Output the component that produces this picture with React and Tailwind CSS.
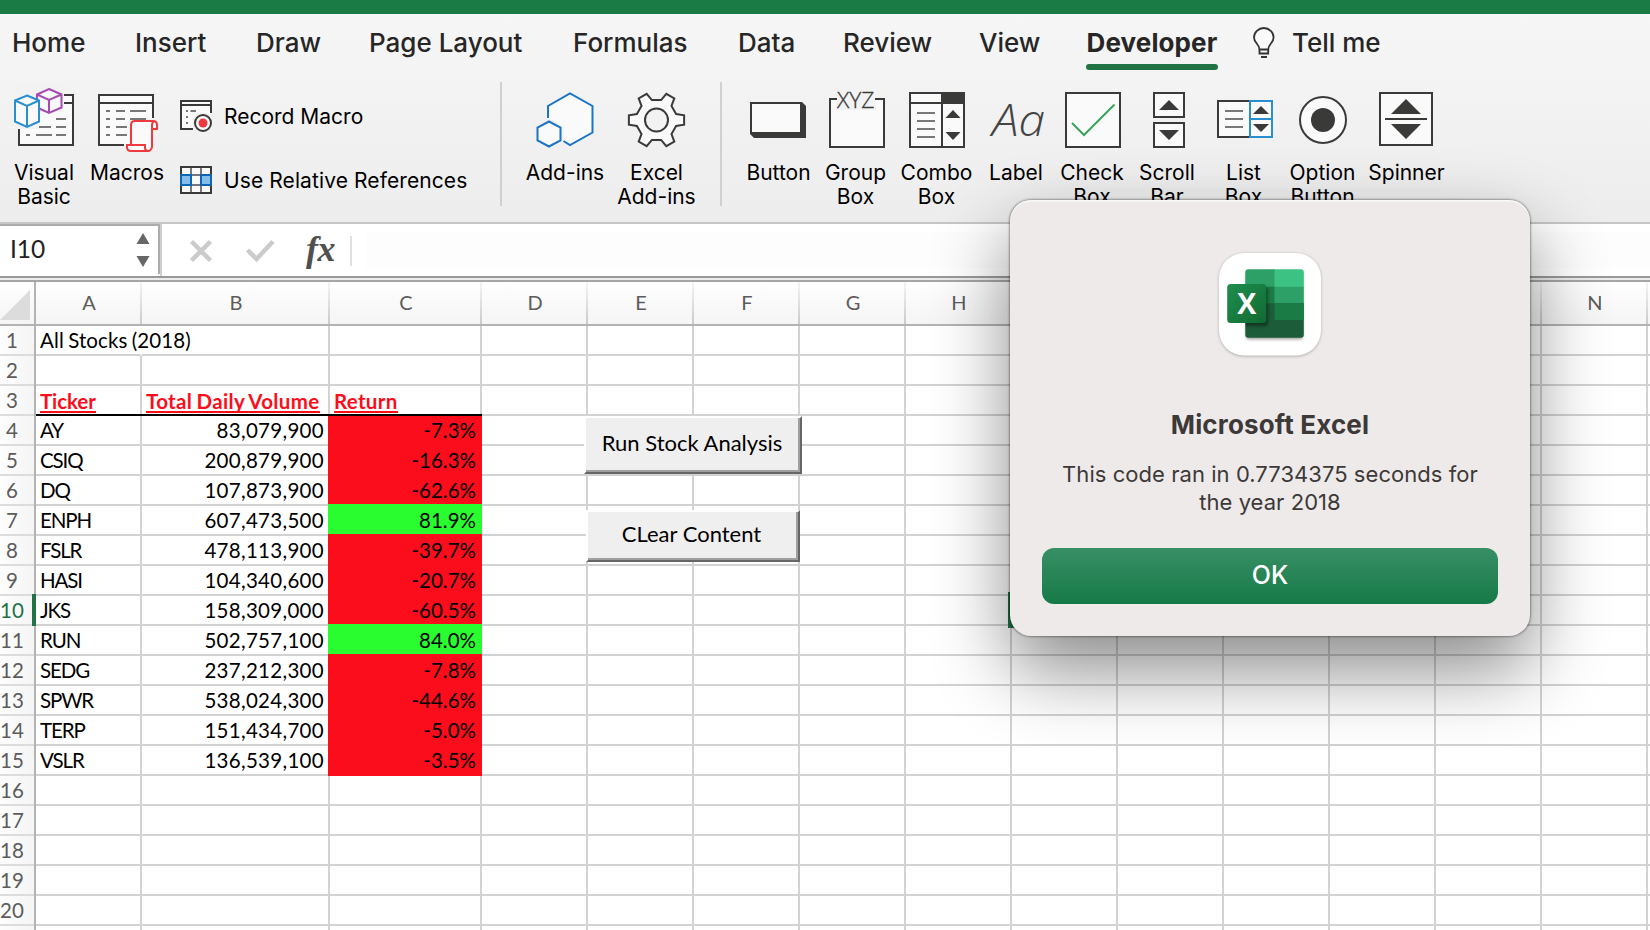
import React from 'react';

const INK = '#3a3a38';
const PALE = '#fafafa';

/* ---------- ribbon icons; every drawing uses the window's coordinate space ---------- */

function Icon({ x, y = 84, w = 80, h = 72, children }) {
  return (
    <svg width={w} height={h} viewBox={`${x} ${y} ${w} ${h}`} className="block shrink-0 overflow-visible" fill="none" stroke={INK} strokeWidth="2">
      {children}
    </svg>
  );
}

const tri = (cx, yBase, yTip, half) => `M${cx - half} ${yBase}H${cx + half}L${cx} ${yTip}Z`;

const VisualBasicIcon = () => (
  <Icon x={4}>
    <path d="M19 95H73V145H19Z" fill={PALE} stroke="none" />
    <path d="M14 86H63.500V112H40V129H14Z" fill="#f2f2f2" stroke="none" />
    <path d="M64 95H73V145H19V129M64 103H73" />
    <path d="M56 119H66M39 127H51M56 127H66M26 135H30M36 135H52M56 135H66" stroke="#777" />
    <path d="M49 89L61.500 94.500V107.500L49 113L37 107.500V94.500Z" fill={PALE} stroke="#a64cb0" />
    <path d="M37 94.500L49 100L61.500 94.500M49 100V113" stroke="#a64cb0" />
    <path d="M27 95.500L39 100.500V121.500L27 127L15 121.500V100.500Z" fill={PALE} stroke="#2a8fd0" />
    <path d="M15 100.500L27 106L39 100.500M27 106V127" stroke="#2a8fd0" />
  </Icon>
);

const MacrosIcon = () => (
  <Icon x={87}>
    <path d="M99 95H153V118H130V145H99Z" fill={PALE} stroke="none" />
    <path d="M153 118V95H99V145H124M99 103H153" />
    <path d="M106 111H110M116 111H125M130 111H146M106 119H110M116 119H125M130 119H146M106 127H110M116 127H127M106 135H110M116 135H127" stroke="#777" />
    <path d="M131 144V125Q131 121 135 121H153Q157 121 157 125V129H152V147Q152 151 148 151H131Q127 151 127 148V145H131Z" fill={PALE} stroke="none" />
    <path d="M131 145V125Q131 121 135 121H153Q157 121 157 125V129H152M154 121Q152 122 152 125V147Q151 151 148 151H131Q127 151 127 147V145H145V148Q145.500 151 148 151" stroke="#ec3a3e" />
  </Icon>
);

const RecordIcon = () => (
  <Icon x={180} y={98} w={34} h={38}>
    <path d="M181 101H211V129H181Z" fill={PALE} stroke="none" />
    <path d="M211 113V101H181V129H193M181 105H211" />
    <path d="M186 111H188M190.500 111H196M186 117H188M186 123H188" stroke="#777" />
    <circle cx="203" cy="123" r="10.500" fill="#f1f1f1" stroke="none" />
    <circle cx="203" cy="123" r="8" fill={PALE} />
    <circle cx="203" cy="123" r="4.500" fill="#ec3a3e" stroke="none" />
  </Icon>
);

const RelativeIcon = () => (
  <Icon x={180} y={162} w={34} h={38}>
    <path d="M181 167H211V193H181Z" fill={PALE} />
    <path d="M191 168V192M201 168V192M182 175H210M182 185H210" stroke="#777" />
    <path d="M181 175H191V185H181ZM201 175H211V185H201Z" fill="#84bdea" stroke="#0f66b5" />
  </Icon>
);

const AddinsIcon = () => (
  <Icon x={524}>
    <path d="M547 118V106L569 93.500L591.500 106V132.500L569 145L562.500 141V127L548 118Z" fill={PALE} stroke="none" />
    <path d="M547 118V106L569 93.500L591.500 106V132.500L569 145L562.500 141" stroke="#1b74c4" />
    <path d="M548 121.500L559.500 127.500V140.500L548 146.500L536.500 140.500V127.500Z" fill={PALE} stroke="#1b74c4" />
  </Icon>
);

const gearPoints = [0, 60, 120, 180, 240, 300]
  .flatMap((a) => [[-17, 20.5], [-9.5, 28], [9.5, 28], [17, 20.5]].map(([d, r]) => {
    const t = ((a + d) * Math.PI) / 180;
    return `${(655 + r * Math.cos(t)).toFixed(2)},${(120 + r * Math.sin(t)).toFixed(2)}`;
  }))
  .join(' ');

const GearIcon = () => (
  <Icon x={615.5}>
    <polygon points={gearPoints} fill={PALE} />
    <circle cx="655" cy="120" r="11.500" fill="#f2f2f2" />
  </Icon>
);

const ButtonIcon = () => (
  <Icon x={739}>
    <path d="M750 102H802L806 106V138H754L750 134Z" fill={INK} stroke="none" />
    <path d="M752 104H800V132H752Z" fill={PALE} stroke="none" />
  </Icon>
);

const GroupIcon = () => (
  <Icon x={816}>
    <path d="M830 99H884V147H830Z" fill={PALE} stroke="none" />
    <path d="M836 90H876V110H836Z" fill="#f3f3f3" stroke="none" />
    <path d="M837 99H830V147H884V99H875" />
    <text x="837" y="108" textLength="37.500" lengthAdjust="spacingAndGlyphs" fontFamily="Open Sans" fontSize="21.500" fontWeight="300" fill={INK} stroke={INK} strokeWidth="0.300">XYZ</text>
  </Icon>
);

const ComboIcon = () => (
  <Icon x={897}>
    <path d="M910 93H964V147H910Z" fill={PALE} />
    <path d="M942 93H964V103H942Z" fill={INK} />
    <path d="M910 103H964M942 93V147" />
    <path d="M917 113H935M917 121H935M917 129H935M917 137H935" stroke="#777" />
    <path d={tri(953, 118, 110, 7.5) + tri(953, 132, 140, 7.5)} fill={INK} stroke="none" />
  </Icon>
);

const LabelIcon = () => (
  <Icon x={976}>
    <text x="992" y="136" textLength="53" lengthAdjust="spacingAndGlyphs" fontFamily="Open Sans" fontSize="44" fontWeight="300" fontStyle="italic" fill="#444" stroke="none">Aa</text>
  </Icon>
);

const CheckIcon = () => (
  <Icon x={1052}>
    <path d="M1066 93H1120V147H1066Z" fill={PALE} />
    <path d="M1072 123L1084 135L1114.500 104.500" stroke="#3aa35a" />
  </Icon>
);

const ScrollIcon = () => (
  <Icon x={1127}>
    <path d="M1154 93H1184V117H1154ZM1154 123H1184V147H1154Z" fill={PALE} />
    <path d={tri(1169, 110, 100, 10) + tri(1169, 130, 140, 10)} fill={INK} stroke="none" />
  </Icon>
);

const ListIcon = () => (
  <Icon x={1204}>
    <path d="M1250 101H1218V137H1250" fill={PALE} />
    <path d="M1250 101H1272V137H1250ZM1250 119H1272" fill={PALE} stroke="#2a8fd0" />
    <path d="M1225 111H1243M1225 119H1243M1225 127H1243" stroke="#777" />
    <path d={tri(1261, 114, 106, 8) + tri(1261, 124, 132, 8)} fill={INK} stroke="none" />
  </Icon>
);

const OptionIcon = () => (
  <Icon x={1283}>
    <circle cx="1323" cy="120" r="23" fill={PALE} />
    <circle cx="1323" cy="120" r="12" fill={INK} stroke="none" />
  </Icon>
);

const SpinnerIcon = () => (
  <Icon x={1367}>
    <path d="M1380 93H1432V145H1380Z" fill={PALE} />
    <path d="M1385 119H1427" />
    <path d={tri(1406, 114, 99, 15) + tri(1406, 124, 139, 15)} fill={INK} stroke="none" />
  </Icon>
);

/* ---------- ribbon ---------- */

const tabs = [
  ['Home', 'w-[123px]'],
  ['Insert', 'w-[121px]'],
  ['Draw', 'w-[113px]'],
  ['Page Layout', 'w-[204px]'],
  ['Formulas', 'w-[165px]'],
  ['Data', 'w-[105px]'],
  ['Review', 'w-[136px]'],
  ['View', 'w-[107px]'],
];

function Tabs() {
  return (
    <nav className="flex h-[60px] pl-[12px] text-[26px] leading-[58px] font-medium text-[#262626]">
      {tabs.map(([name, width]) => (
        <span key={name} className={`shrink-0 whitespace-nowrap ${width}`}>{name}</span>
      ))}
      <span className="mr-[34px] flex w-[132px] shrink-0 flex-col text-center font-bold tracking-[0.1px]">
        <span className="h-[50px]">Developer</span>
        <span className="h-[6px] rounded-full bg-[#217346]" />
      </span>
      <svg width="24" height="34" viewBox="0 0 24 34" className="mt-[12px] mr-[16px] shrink-0" fill="none" stroke="#333" strokeWidth="1.800">
        <path d="M7.500 23.500C7.500 18 2 17 2 11.500A9.800 9.500 0 0 1 21.600 11.500C21.600 17 16.200 18 16.200 23.500Z" fill={PALE} />
        <path d="M7.500 23.500V27.500H16.200V23.500M9 31H15" />
      </svg>
      <span className="whitespace-nowrap">Tell me</span>
    </nav>
  );
}

function Tool({ icon, label, width }) {
  return (
    <div className={`flex shrink-0 flex-col items-center pt-[10px] ${width}`}>
      {icon}
      <div className="mt-[5px] text-center text-[21px] leading-[24px] whitespace-pre text-black">{label}</div>
    </div>
  );
}

const Divider = ({ className }) => <div className={`mt-[8px] h-[124px] w-[2px] shrink-0 bg-[#d0d0d0] ${className}`} />;

function Ribbon() {
  return (
    <header className="h-[210px] border-b-2 border-[#c6c6c6] bg-linear-to-b from-[#f6f6f6] to-[#ededed]">
      <Tabs />
      <div className="flex h-[148px] overflow-hidden pl-[3px]">
        <Tool icon={<VisualBasicIcon />} label={'Visual\nBasic'} width="w-[82px]" />
        <Tool icon={<MacrosIcon />} label="Macros" width="w-[84px]" />
        <div className="flex w-[331px] shrink-0 flex-col gap-[26px] pt-[24px] pl-[11px] text-[21px] leading-[38px] text-black">
          <div className="flex h-[38px] gap-[10px]"><RecordIcon /><span>Record Macro</span></div>
          <div className="flex h-[38px] gap-[10px] tracking-[0.1px] whitespace-nowrap"><RelativeIcon /><span>Use Relative References</span></div>
        </div>
        <Divider className="mr-[17px]" />
        <Tool icon={<AddinsIcon />} label="Add-ins" width="w-[92px]" />
        <Tool icon={<GearIcon />} label={'Excel\nAdd-ins'} width="w-[91px]" />
        <Divider className="mr-[18px] ml-[18px]" />
        <Tool icon={<ButtonIcon />} label="Button" width="w-[77px]" />
        <Tool icon={<GroupIcon />} label={'Group\nBox'} width="w-[77px]" />
        <Tool icon={<ComboIcon />} label={'Combo\nBox'} width="w-[85px]" />
        <Tool icon={<LabelIcon />} label="Label" width="w-[74px]" />
        <Tool icon={<CheckIcon />} label={'Check\nBox'} width="w-[78px]" />
        <Tool icon={<ScrollIcon />} label={'Scroll\nBar'} width="w-[72px]" />
        <Tool icon={<ListIcon />} label={'List\nBox'} width="w-[81px]" />
        <Tool icon={<OptionIcon />} label={'Option\nButton'} width="w-[77px]" />
        <Tool icon={<SpinnerIcon />} label="Spinner" width="w-[91px]" />
      </div>
    </header>
  );
}

/* ---------- formula bar ---------- */

function FormulaBar() {
  return (
    <div className="flex h-[52px] bg-white">
      <div className="flex h-[50px] w-[160px] items-center justify-between border-t-2 border-r-2 border-[#acacac] pr-[8px] pl-[10px] font-[Lato] text-[24.5px] text-[#222]">
        <span className="-mt-[2px]">I10</span>
        <svg width="14" height="36" viewBox="0 0 14 36" fill="#666">
          <path d="M0.500 12L7 1L13.500 12ZM0.500 24H13.500L7 35Z" />
        </svg>
      </div>
      <div className="w-[2px] bg-[#cfcfcf]" />
      <svg width="24" height="24" viewBox="0 0 24 24" className="mt-[15px] ml-[27px]" fill="none" stroke="#cbcbcb" strokeWidth="4.500">
        <path d="M2.500 2.500L21.500 21.500M21.500 2.500L2.500 21.500" />
      </svg>
      <svg width="30" height="24" viewBox="0 0 30 24" className="mt-[15px] ml-[32px]" fill="none" stroke="#cbcbcb" strokeWidth="4.500">
        <path d="M2.500 11L11.500 20L28 2.500" />
      </svg>
      <span className="ml-[31px] w-[44px] font-['Liberation_Serif'] text-[36px] leading-[51px] font-bold tracking-[-0.5px] text-[#505050] italic">fx</span>
      <div className="mt-[12px] h-[30px] w-[2px] bg-[#e0e0e0]" />
      <div className="mt-[8px] ml-[14px] h-[36px] grow bg-[#fdfdfd]" />
    </div>
  );
}

/* ---------- sheet ---------- */

const columns = [
  ['A', 'w-[106px]'], ['B', 'w-[188px]'], ['C', 'w-[152px]'],
  ...'DEFGHIJKLMN'.split('').map((c) => [c, 'w-[106px]']),
];

const stocks = [
  ['AY', '83,079,900', '-7.3%'],
  ['CSIQ', '200,879,900', '-16.3%'],
  ['DQ', '107,873,900', '-62.6%'],
  ['ENPH', '607,473,500', '81.9%'],
  ['FSLR', '478,113,900', '-39.7%'],
  ['HASI', '104,340,600', '-20.7%'],
  ['JKS', '158,309,000', '-60.5%'],
  ['RUN', '502,757,100', '84.0%'],
  ['SEDG', '237,212,300', '-7.8%'],
  ['SPWR', '538,024,300', '-44.6%'],
  ['TERP', '151,434,700', '-5.0%'],
  ['VSLR', '136,539,100', '-3.5%'],
];

const titles = {
  A: ['Ticker', 'tracking-[-0.1px]'],
  B: ['Total Daily Volume', 'tracking-[0.35px] [word-spacing:-1px]'],
  C: ['Return', 'tracking-[0.3px]'],
};

function HeaderRow() {
  return (
    <div className="flex h-[44px] border-b-2 border-[#b3b3b3] bg-linear-to-b from-[#fefefe] to-[#f5f5f5] text-[20px] leading-[41px] text-[#5c5c5c]">
      <div className="flex w-[36px] shrink-0 border-r-2 border-[#b3b3b3]">
        <svg width="30" height="30" viewBox="0 0 30 30" className="mt-[8px]"><path d="M30 0V30H0Z" fill="#dcdcdc" /></svg>
      </div>
      {columns.map(([name, width]) => (
        <div key={name} className={`flex shrink-0 ${width}`}>
          <span className="grow pl-[2px] text-center">{name}</span>
          <span className="w-[2px] bg-linear-to-b from-[#f4f4f4] to-[#cbcbcb]" />
        </div>
      ))}
    </div>
  );
}

function cellContent(row, col) {
  if (row === 1 && col === 'A') return <span className="tracking-[0.1px] [word-spacing:-1px]">All Stocks (2018)</span>;
  if (row === 3 && titles[col]) {
    const [text, tracking] = titles[col];
    return (
      <span className={`mt-[4px] h-[23px] border-b-2 border-[#fc0d1b] leading-[22px] font-bold text-[#fc0d1b] ${tracking}`}>{text}</span>
    );
  }
  const stock = stocks[row - 4];
  if (!stock) return null;
  if (col === 'A') return <span className="tracking-[-1.1px]">{stock[0]}</span>;
  if (col === 'B') return <span className="ml-auto tracking-[0.3px]">{stock[1]}</span>;
  if (col === 'C') return <span className="ml-auto">{stock[2]}</span>;
  return null;
}

function Cell({ row, col, width }) {
  const stock = stocks[row - 4];
  if (stock && col === 'C') {
    const color = stock[2].startsWith('-') ? 'bg-[#fc0d1b]' : 'bg-[#29fd2f]';
    const top = row === 4 ? 'h-[30px]' : '-mt-[2px] h-[32px] pt-[2px]';
    return (
      <div className={`relative -ml-[2px] flex w-[154px] shrink-0 pr-[6px] ${color} ${top}`}>{cellContent(row, col)}</div>
    );
  }
  const right = row === 1 && col === 'A' ? 'border-r-white' : 'border-r-[#d2d2d2]';
  return (
    <div className={`relative flex h-[30px] shrink-0 items-start whitespace-nowrap border-r-2 border-b-2 border-b-[#d2d2d2] px-[4px] ${width} ${right}`}>
      {cellContent(row, col)}
      {row === 3 && titles[col] && <span className="absolute -right-[2px] -bottom-[2px] left-0 h-[2px] bg-black" />}
    </div>
  );
}

function Sheet() {
  return (
    <main className="relative h-[648px] overflow-hidden bg-white font-[Lato] text-[20.5px] leading-[28px] text-black">
      <HeaderRow />
      {Array.from({ length: 21 }, (_, i) => i + 1).map((row) => (
        <div key={row} className="flex h-[30px]">
          <div className={`flex w-[36px] shrink-0 border-r-2 border-[#b3b3b3] bg-linear-to-r from-[#fdfdfd] to-[#f5f5f5] ${row === 10 ? 'text-[#217346]' : 'text-[#5c5c5c]'}`}>
            <span className="h-[30px] w-[34px] shrink-0 border-b-2 border-[#dcdcdc]">
              {row < 21 && <span className="block w-[24px] text-center">{row}</span>}
            </span>
            {row === 10 && <span className="relative -mt-[2px] -mr-[2px] -ml-[2px] h-[32px] w-[4px] shrink-0 bg-[#217346]" />}
          </div>
          {columns.map(([col, width]) => <Cell key={col} row={row} col={col} width={width} />)}
          <div className="grow border-b-2 border-[#d2d2d2]" />
        </div>
      ))}

      {/* form controls floating above the grid */}
      <button className="absolute top-[134px] left-[584px] h-[58px] w-[218px] border-2 border-t-white border-r-[#666] border-b-[#666] border-l-white bg-[#efefef] pr-[2px] pb-[4px] text-[22px] leading-[50px] shadow-[inset_-2px_-2px_0_#a0a0a0]">
        Run Stock Analysis
      </button>
      <button className="absolute top-[228px] left-[586px] h-[52px] w-[214px] border-2 border-t-white border-r-[#666] border-b-[#666] border-l-white bg-[#efefef] pr-[3px] pb-[4px] text-[22px] leading-[44px] shadow-[inset_-2px_-2px_0_#a0a0a0]">
        CLear Content
      </button>
      <div className="absolute top-[310px] left-[1008px] h-[36px] w-[112px] border-4 border-[#217346]" />
    </main>
  );
}

/* ---------- alert ---------- */

function ExcelLogo() {
  return (
    <svg width="104" height="104" viewBox="1218 252 104 104" className="overflow-visible">
      <defs>
        <linearGradient id="tile" x1="0" y1="0" x2="1" y2="1">
          <stop offset="0" stopColor="#1f8e50" />
          <stop offset="1" stopColor="#116a31" />
        </linearGradient>
        <clipPath id="doc"><rect x="1245.300" y="269.300" width="58.500" height="68.400" rx="3" /></clipPath>
        <filter id="soft" x="-30%" y="-30%" width="160%" height="170%"><feGaussianBlur stdDeviation="1.800" /></filter>
      </defs>
      <rect x="1219" y="253.500" width="102" height="103" rx="25" fill="#000" opacity="0.250" filter="url(#soft)" />
      <rect x="1219" y="253" width="102" height="102.500" rx="25" fill="#fff" />
      <rect x="1246" y="272" width="57" height="67.500" rx="3" fill="#000" opacity="0.350" filter="url(#soft)" />
      <g clipPath="url(#doc)">
        <path d="M1245 269H1275V287H1245Z" fill="#2ca066" />
        <path d="M1274.500 269H1304V287H1274.500Z" fill="#3cc384" />
        <path d="M1245 286.700H1275V304H1245Z" fill="#1b7b45" />
        <path d="M1274.500 286.700H1304V304H1274.500Z" fill="#2ca066" />
        <path d="M1245 303.300H1304V338H1245Z" fill="#1c5c38" />
        <path d="M1274.500 303.300H1304V320H1274.500Z" fill="#1b7b45" />
        <rect x="1229" y="287" width="39" height="39" rx="3" fill="#000" opacity="0.400" filter="url(#soft)" />
      </g>
      <rect x="1227.200" y="284" width="39" height="39" rx="3.500" fill="url(#tile)" />
      <text x="1246.800" y="314" textAnchor="middle" textLength="19" lengthAdjust="spacingAndGlyphs" fontFamily="Open Sans" fontWeight="700" fontSize="29" fill="#fff">X</text>
    </svg>
  );
}

function Alert() {
  return (
    <div
      role="alertdialog"
      className="absolute top-[200px] left-[1010px] flex h-[436px] w-[520px] flex-col items-center rounded-[21px] bg-[#eeeaea] px-[32px] pt-[52px] text-[#3c3938] shadow-[0_0_2px_1px_rgba(0,0,0,0.35),0_34px_76px_rgba(0,0,0,0.46),inset_0_1.5px_0_rgba(255,255,255,0.7)]"
    >
      <ExcelLogo />
      <h1 className="mt-[53px] text-[26px] leading-[32px] font-bold tracking-[0.15px]">Microsoft Excel</h1>
      <p className="mt-[19px] text-center text-[22px] leading-[28px] tracking-[0.05px] whitespace-pre">{'This code ran in 0.7734375 seconds for\nthe year 2018'}</p>
      <button className="mt-[32px] h-[56px] w-full rounded-[12px] bg-linear-to-b from-[#378f66] to-[#147a47] pb-[2px] text-[25px] leading-[52px] font-medium text-white">OK</button>
    </div>
  );
}

export default function App() {
  return (
    <div className="relative h-[930px] w-[1650px] overflow-hidden bg-white font-[Inter]">
      <div className="h-[14px] bg-[#1b7b45]" />
      <Ribbon />
      <FormulaBar />
      <div className="h-[6px] border-y-2 border-t-[#999] border-b-[#a6a6a6] bg-[#ececec]" />
      <Sheet />
      <Alert />
    </div>
  );
}
